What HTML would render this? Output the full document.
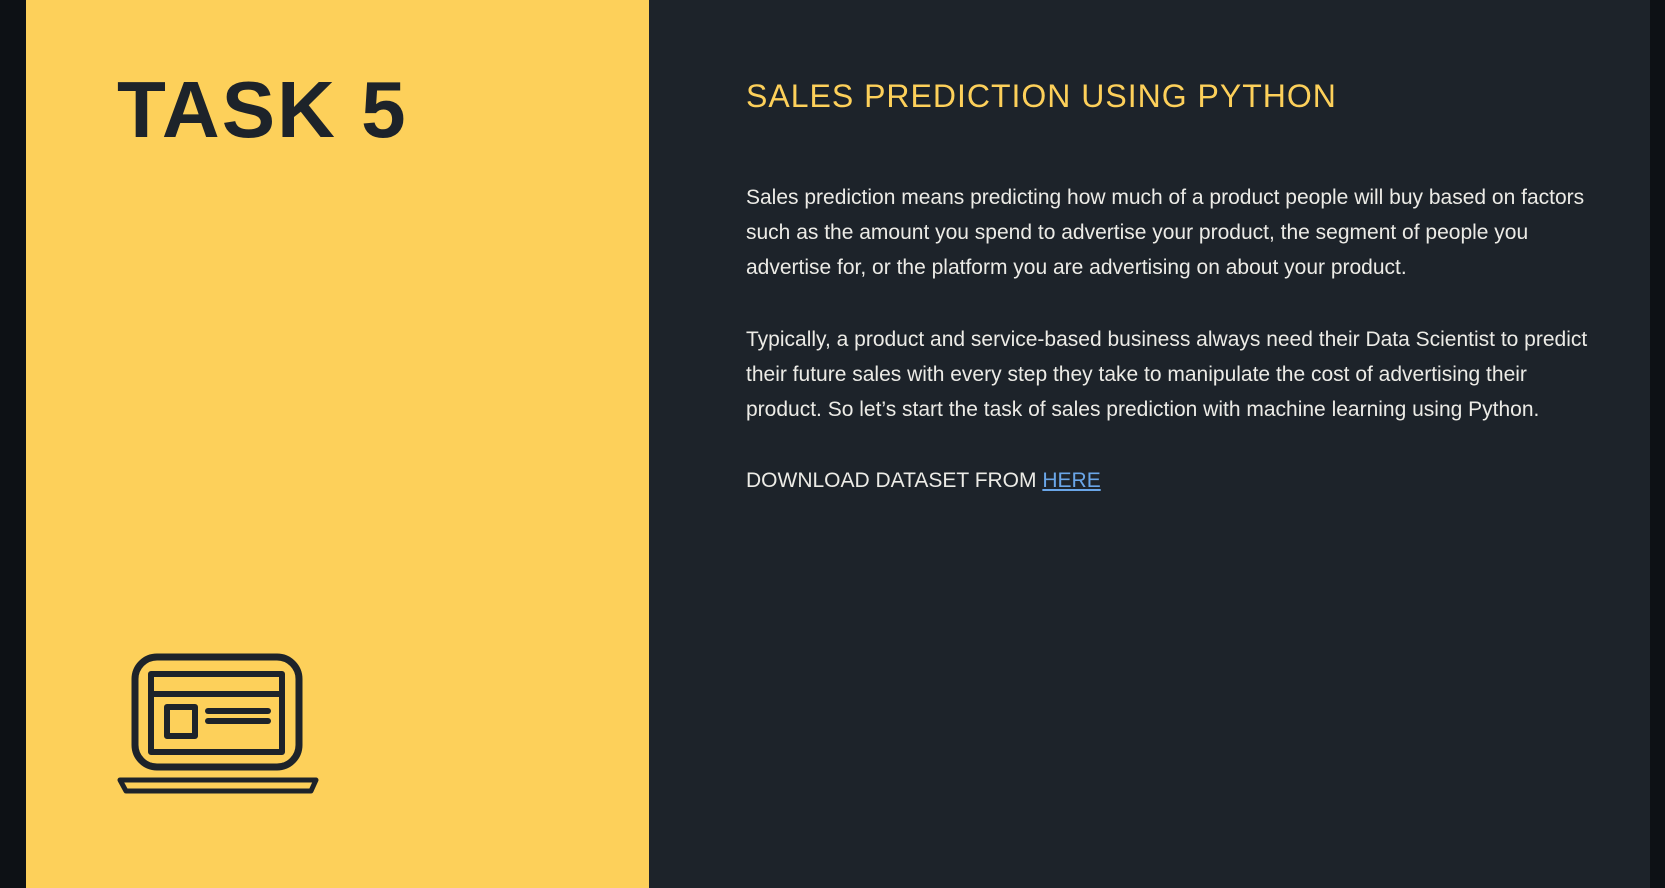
<!DOCTYPE html>
<html><head><meta charset="utf-8"><style>
html,body{margin:0;padding:0;width:1665px;height:888px;overflow:hidden;background:#0d1115;font-family:"Liberation Sans",sans-serif}
#y{position:absolute;left:26px;top:0;width:623px;height:888px;background:#fdd05a}
#d{position:absolute;left:649px;top:0;width:1001px;height:888px;background:#1d232a}
h1{position:absolute;left:117px;top:60px;margin:0;font-size:80px;font-weight:bold;letter-spacing:2px;color:#1d232a;line-height:100px;white-space:nowrap}
h2{position:absolute;left:746px;top:76px;margin:0;font-size:32px;font-weight:normal;letter-spacing:1px;color:#fdd05a;line-height:40px;white-space:nowrap}
.p{position:absolute;left:746px;margin:0;font-size:21px;color:#ecebe6;line-height:35px;white-space:nowrap}
a{color:#6aa6e8;text-decoration:underline}
</style></head><body>
<div id="y"></div><div id="d"></div>
<h1>TASK 5</h1>
<svg style="position:absolute;left:0;top:0" width="1665" height="888">
<g fill="none" stroke="#1d232a" stroke-linejoin="round">
<rect x="135" y="657" width="164" height="110" rx="22" stroke-width="7"/>
<rect x="151" y="674" width="131" height="78" stroke-width="6"/>
<line x1="151" y1="694" x2="282" y2="694" stroke-width="6"/>
<rect x="167" y="707" width="28" height="29" stroke-width="6"/>
<line x1="208" y1="711" x2="268" y2="711" stroke-width="6" stroke-linecap="round"/>
<line x1="208" y1="721" x2="268" y2="721" stroke-width="6" stroke-linecap="round"/>
<path d="M120 780 L316 780 L311 791 L126 791 Z" stroke-width="5"/>
</g></svg>
<h2>SALES PREDICTION USING PYTHON</h2>
<p class="p" style="top:180px">Sales prediction means predicting how much of a product people will buy based on factors<br>such as the amount you spend to advertise your product, the segment of people you<br>advertise for, or the platform you are advertising on about your product.</p>
<p class="p" style="top:322px">Typically, a product and service-based business always need their Data Scientist to predict<br>their future sales with every step they take to manipulate the cost of advertising their<br>product. So let’s start the task of sales prediction with machine learning using Python.</p>
<p class="p" style="top:463px">DOWNLOAD DATASET FROM <a>HERE</a></p>
</body></html>
